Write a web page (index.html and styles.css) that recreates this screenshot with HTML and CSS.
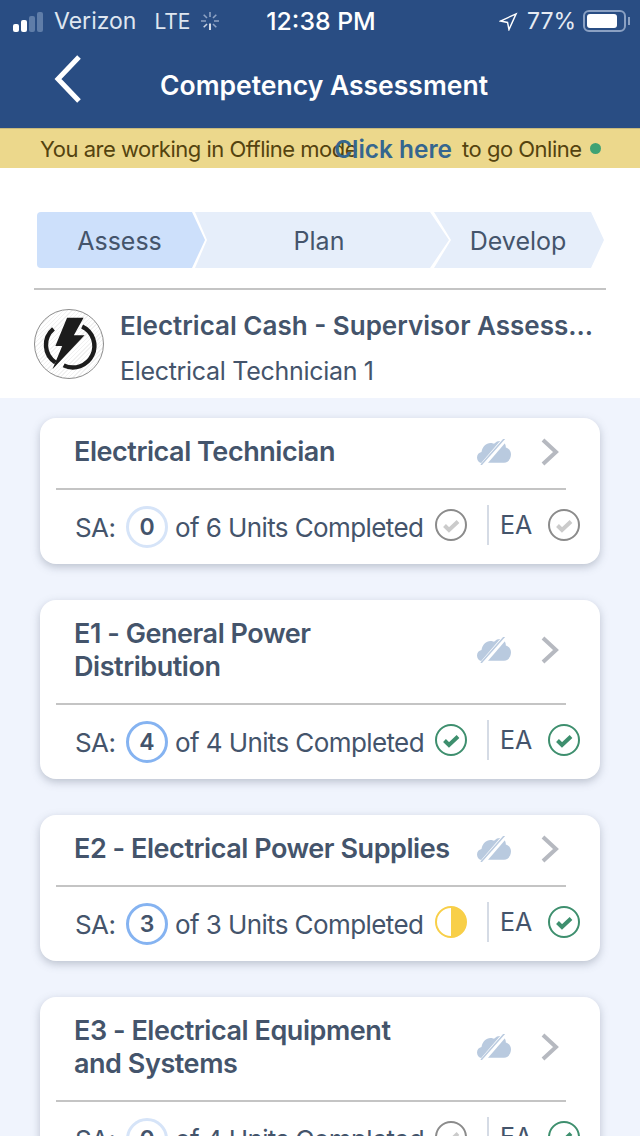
FILE: index.html
```html
<!DOCTYPE html>
<html lang="en">
<head>
<meta charset="utf-8">
<title>Competency Assessment</title>
<link rel="stylesheet" href="styles.css">
</head>
<body>
<svg class="defs" width="0" height="0">
  <symbol id="cloud" viewBox="0 0 34 26">
    <path fill="#b9cadf" d="M4 24c-2.500-.5-4-3-4-5.500 0-3 2-5 4.500-5.500C5.500 7.500 9 4 13.500 4c1.500 0 2.500.2 3.500.8L20 2.500c2-.8 4.500-.7 6 .2 2 1.300 3 3.500 2.800 5.800 3 .7 5.200 3.500 5.200 6.800 0 4.500-3 8.500-7 8.500H11z"/>
    <path stroke="#fff" stroke-width="5" d="M5 27 29-1"/>
    <path stroke="#b9cadf" stroke-width="1.500" d="M4 26 28-1"/>
  </symbol>
  <symbol id="chev" viewBox="0 0 18 28">
    <path fill="none" stroke="#b6b9c0" stroke-width="4" d="M2 2l13 12L2 26"/>
  </symbol>
  <symbol id="check-grey" viewBox="0 0 32 32">
    <circle cx="16" cy="16" r="15" fill="none" stroke="#8b8b8b" stroke-width="2"/>
    <path fill="none" stroke="#cbcbcb" stroke-width="4" d="M9.500 16.500l4.500 4.500 9-8.500"/>
  </symbol>
  <symbol id="check-green" viewBox="0 0 32 32">
    <circle cx="16" cy="16" r="15" fill="none" stroke="#3e8f6e" stroke-width="2"/>
    <path fill="none" stroke="#3e8f6e" stroke-width="4" d="M9.500 16.500l4.500 4.500 9-8.500"/>
  </symbol>
  <symbol id="half" viewBox="0 0 32 32">
    <circle cx="16" cy="16" r="15" fill="#fff" stroke="#f8cf48" stroke-width="2"/>
    <path fill="#f8cf48" d="M16 1a15 15 0 0 1 0 30z"/>
  </symbol>
</svg>

<header class="top">
  <div class="status">
    <div class="status-side">
      <span class="signal"><i class="on b1"></i><i class="on b2"></i><i class="b3"></i><i class="b4"></i></span>
      <span class="carrier">Verizon</span>
      <span class="lte">LTE</span>
      <svg class="spin" viewBox="0 0 20 20" width="20" height="20">
        <path stroke="#fff" stroke-width="1.600" d="M10 12.500V19"/>
        <path stroke="#8ea3c4" stroke-width="1.600" d="M10 1v5M1 10h5M14 10h5M3.700 3.700l3.300 3.300M16.300 3.700 13 7M16.300 16.300 13 13"/>
        <path stroke="#c9d3e3" stroke-width="1.600" d="M3.700 16.300 7 13"/>
      </svg>
    </div>
    <div class="clock">12:38 PM</div>
    <div class="status-side right">
      <svg class="loc" viewBox="0 0 20 20" width="19" height="19"><path fill="none" stroke="#fff" stroke-width="1.500" d="M18 2 1.500 9.500l7.500 1.500 1.500 7.500z"/></svg>
      <span class="pct">77%</span>
      <span class="battery"><span class="fill"></span></span>
      <span class="nub"></span>
    </div>
  </div>
  <div class="nav">
    <svg class="back" viewBox="0 0 30 50" width="30" height="50"><path fill="none" stroke="#fff" stroke-width="5" d="M26 3 5 25l21 22"/></svg>
    <h1 class="nav-title">Competency Assessment</h1>
  </div>
</header>

<div class="banner">
  <span class="b-text">You are working in Offline mode</span>
  <a class="b-link">Click here</a>
  <span class="b-text b-after">to go Online</span>
  <span class="b-dot"></span>
</div>

<section class="intro">
  <div class="steps">
    <div class="step s1">Assess</div>
    <div class="step s2">Plan</div>
    <div class="step s3">Develop</div>
  </div>
  <div class="rule"></div>
  <div class="course">
    <span class="logo">
      <svg viewBox="0 0 70 70" width="68" height="68">
        <path fill="none" stroke="#1c1c1c" stroke-width="4.500" d="M19 19.500a21.500 21.500 0 0 0 2 34.500M29.500 57a21.500 21.500 0 0 0 19-40"/>
        <path fill="#1c1c1c" d="M33 8h17l-10 18h11L18 61l10-24h-7z"/>
      </svg>
    </span>
    <div class="course-text">
      <div class="course-title">Electrical Cash - Supervisor Assess...</div>
      <div class="course-sub">Electrical Technician 1</div>
    </div>
  </div>
</section>

<main class="list">
  <article class="card">
    <div class="card-head">
      <h2 class="card-title">Electrical Technician</h2>
      <svg class="cloud"><use href="#cloud"/></svg>
      <svg class="chev"><use href="#chev"/></svg>
    </div>
    <div class="card-foot">
      <span class="sa">SA:</span><span class="count light">0</span><span class="units">of 6 Units Completed</span>
      <svg class="mark"><use href="#check-grey"/></svg>
      <span class="sep"></span><span class="ea">EA</span>
      <svg class="mark"><use href="#check-grey"/></svg>
    </div>
  </article>

  <article class="card">
    <div class="card-head">
      <h2 class="card-title">E1 - General Power<br>Distribution</h2>
      <svg class="cloud"><use href="#cloud"/></svg>
      <svg class="chev"><use href="#chev"/></svg>
    </div>
    <div class="card-foot">
      <span class="sa">SA:</span><span class="count">4</span><span class="units">of 4 Units Completed</span>
      <svg class="mark"><use href="#check-green"/></svg>
      <span class="sep"></span><span class="ea">EA</span>
      <svg class="mark"><use href="#check-green"/></svg>
    </div>
  </article>

  <article class="card">
    <div class="card-head">
      <h2 class="card-title">E2 - Electrical Power Supplies</h2>
      <svg class="cloud"><use href="#cloud"/></svg>
      <svg class="chev"><use href="#chev"/></svg>
    </div>
    <div class="card-foot">
      <span class="sa">SA:</span><span class="count">3</span><span class="units">of 3 Units Completed</span>
      <svg class="mark"><use href="#half"/></svg>
      <span class="sep"></span><span class="ea">EA</span>
      <svg class="mark"><use href="#check-green"/></svg>
    </div>
  </article>

  <article class="card">
    <div class="card-head">
      <h2 class="card-title">E3 - Electrical Equipment<br>and Systems</h2>
      <svg class="cloud"><use href="#cloud"/></svg>
      <svg class="chev"><use href="#chev"/></svg>
    </div>
    <div class="card-foot">
      <span class="sa">SA:</span><span class="count light">0</span><span class="units">of 4 Units Completed</span>
      <svg class="mark"><use href="#check-grey"/></svg>
      <span class="sep"></span><span class="ea">EA</span>
      <svg class="mark"><use href="#check-green"/></svg>
    </div>
  </article>
</main>
</body>
</html>
```
FILE: styles.css
```css
* { box-sizing: border-box; }
html, body { margin: 0; padding: 0; }
body {
  width: 640px;
  height: 1136px;
  overflow: hidden;
  background: #f0f4fd;
  font-family: Inter, "Liberation Sans", sans-serif;
  color: #44546b;
}
.defs { position: absolute; }

.top { background: #294d83; height: 128px; color: #fff; }
.status {
  height: 42px;
  padding: 0 10px 0 13px;
  display: flex;
  align-items: center;
  justify-content: space-between;
  font-size: 23px;
}
.status-side { display: flex; align-items: center; width: 220px; }
.status-side.right { justify-content: flex-end; }
.signal { display: flex; align-items: flex-end; gap: 2px; height: 21px; margin-right: 11px; }
.signal i { display: block; width: 6px; background: #5f7da8; border-radius: 2px; }
.signal .on { background: #fff; }
.b1 { height: 8px; }
.b2 { height: 12px; }
.b3 { height: 16px; }
.b4 { height: 20px; }
.carrier { color: #dfe6f0; font-weight: 400; }
.lte { color: #dfe6f0; margin-left: 18px; font-size: 21px; }
.spin { margin-left: 9px; }
.clock { font-weight: 500; font-size: 24.8px; margin-right: 1px; }
.loc { margin-right: 9px; }
.pct { color: #e6ebf3; margin-right: 7px; }
.battery {
  flex: none;
  width: 43px; height: 22px;
  border: 2px solid #8ba1c3;
  border-radius: 6px;
  padding: 2px;
  display: block;
}
.fill { display: block; width: 30px; height: 14px; background: #fff; border-radius: 3px; }
.nub { width: 2px; height: 8px; background: #8ba1c3; margin-left: 2px; }

.nav { height: 86px; display: flex; align-items: center; padding-left: 53px; }
.back { flex: none; margin-top: -12px; }
.nav-title {
  margin: -1px 0 0 77px;
  font-size: 26.5px;
  line-height: 30px;
  font-weight: 600;
  white-space: nowrap;
}

.banner {
  height: 40px;
  background: #ecd88c;
  border-top: 1px solid #c9b97c;
  padding-left: 40px;
  display: flex;
  align-items: center;
  font-size: 22px;
  letter-spacing: -.5px;
  color: #54430f;
  white-space: nowrap;
}
.b-link { color: #35668f; font-weight: 600; font-size: 24.4px; letter-spacing: 0; margin-left: -23px; }
.b-after { margin-left: 10px; }
.b-dot { width: 11px; height: 11px; border-radius: 50%; background: #3fa274; margin-left: 8px; }

.intro { background: #fff; height: 230px; padding: 44px 34px 0; }
.steps { display: flex; height: 56px; margin-left: 3px; font-size: 25px; }
.step { display: flex; align-items: center; justify-content: center; background: #e6eefa; flex: none; padding-top: 2px; }
.s1 {
  width: 168px;
  padding-right: 3px;
  background: #cde0fb;
  border-radius: 4px 0 0 4px;
  clip-path: polygon(0 0, 155px 0, 168px 28px, 155px 56px, 0 56px);
}
.s2 {
  width: 254px;
  padding-right: 6px;
  margin-left: -10px;
  clip-path: polygon(0 0, 235px 0, 254px 28px, 235px 56px, 0 56px, 12px 28px);
}
.s3 {
  width: 170px;
  padding-right: 2px;
  margin-left: -15px;
  clip-path: polygon(0 0, 157px 0, 170px 28px, 157px 56px, 0 56px, 17px 28px);
}
.rule { height: 2px; background: #c4c4c4; margin-top: 20px; width: 572px; }
.course { display: flex; margin-top: 19px; }
.logo {
  flex: none;
  width: 70px; height: 70px;
  border-radius: 50%;
  border: 1px solid #8d8d8d;
  display: block;
  background: repeating-linear-gradient(135deg, #fff 0 2px, #f1f1f1 2px 3px);
}
.logo svg { display: block; }
.course-text { margin-left: 16px; margin-top: -1px; }
.course-title { font-size: 26px; font-weight: 600; line-height: 36px; white-space: nowrap; }
.course-sub { font-size: 25px; letter-spacing: -.3px; line-height: 36px; margin-top: 9px; }

.list { padding: 20px 40px 0; display: flex; flex-direction: column; }
.card {
  flex: none;
  background: #fff;
  border-radius: 16px;
  box-shadow: 0 3px 8px rgba(90, 100, 120, .35);
  padding: 0 34px 0 16px;
  margin-bottom: 36px;
}
.card-head {
  display: flex;
  align-items: center;
  padding: 17px 0 20px 18px;
  border-bottom: 2px solid #c4c4c4;
}
.card-title {
  margin: 0;
  flex: 1;
  font-size: 27px;
  line-height: 33px;
  font-weight: 600;
  letter-spacing: -.45px;
  white-space: nowrap;
}
.cloud { flex: none; width: 34px; height: 26px; margin-right: 30px; }
.chev { flex: none; width: 18px; height: 28px; margin-right: 7px; }
.card-foot {
  display: flex;
  align-items: center;
  height: 74px;
  padding-left: 19px;
  margin-right: -15px;
  font-size: 26px;
  letter-spacing: -.6px;
}
.sa { flex: none; width: 51px; }
.count {
  flex: none;
  width: 42px; height: 42px;
  border-radius: 50%;
  border: 3px solid #85b3f1;
  display: flex;
  align-items: center;
  justify-content: center;
  font-size: 23px;
  letter-spacing: 0;
  font-weight: 600;
}
.count.light { border-color: #d6e4f8; }
.units { flex: none; margin-left: 7px; width: 260px; white-space: nowrap; }
.mark { flex: none; width: 32px; height: 32px; margin-top: -4px; }
.sep { flex: none; width: 2px; height: 40px; background: #d5dbe5; margin: -4px 11px 0 20px; }
.ea { flex: none; width: 48px; margin-top: -4px; font-size: 25px; letter-spacing: 0; }
```
